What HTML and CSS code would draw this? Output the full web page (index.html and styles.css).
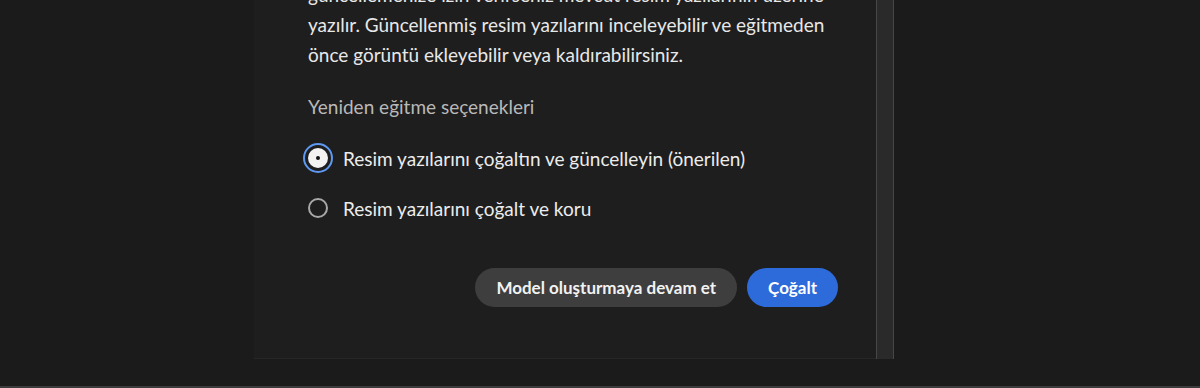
FILE: index.html
```html
<!DOCTYPE html>
<html lang="tr">
<head>
<meta charset="utf-8">
<title>Yeniden eğitme</title>
<link rel="stylesheet" href="styles.css">
</head>
<body>
<div class="screen">
  <div class="dialog">
    <div class="dialog-body">
      <p class="desc">güncellemenize izin verirseniz mevcut resim yazılarının üzerine<br>yazılır. Güncellenmiş resim yazılarını inceleyebilir ve eğitmeden<br>önce görüntü ekleyebilir veya kaldırabilirsiniz.</p>
      <div class="group-label">Yeniden eğitme seçenekleri</div>
      <div class="radios">
        <label class="radio">
          <span class="radio-ctl checked"><span class="radio-dot"></span></span>
          <span class="radio-text">Resim yazılarını çoğaltın ve güncelleyin (önerilen)</span>
        </label>
        <label class="radio">
          <span class="radio-ctl"><span class="radio-dot"></span></span>
          <span class="radio-text">Resim yazılarını çoğalt ve koru</span>
        </label>
      </div>
      <div class="actions">
        <button class="btn btn-secondary">Model oluşturmaya devam et</button>
        <button class="btn btn-primary">Çoğalt</button>
      </div>
    </div>
    <div class="scrollbar"></div>
  </div>
  <div class="bottom-line"></div>
</div>
</body>
</html>
```

FILE: styles.css
```css
html, body {
  margin: 0;
  padding: 0;
  background: #1b1b1b;
}
body {
  width: 1200px;
  height: 388px;
  overflow: hidden;
  font-family: "Lato", "Noto Sans", sans-serif;
  color: #e6e6e6;
}
.screen {
  height: 388px;
  display: flex;
  flex-direction: column;
}
.dialog {
  margin-left: 254px;
  width: 640px;
  height: 359px;
  display: flex;
  flex-shrink: 0;
}
.dialog-body {
  flex: 1;
  background: #1e1e1e;
  padding: 0 38px 0 54px;
  display: flex;
  flex-direction: column;
  overflow: hidden;
  border-bottom: 1px solid #262626;
}
.desc {
  margin: -20px 0 0 0;
  font-size: 19px;
  line-height: 30px;
  color: #e8e8e8;
  white-space: nowrap;
}
.group-label {
  margin-top: 22px;
  font-size: 19px;
  line-height: 30px;
  color: #b9b9b9;
}
.radios {
  margin-top: 11px;
  display: flex;
  flex-direction: column;
}
.radio {
  height: 50px;
  display: flex;
  align-items: center;
  gap: 10px;
  font-size: 19px;
  color: #ececec;
}
.radio-ctl {
  width: 30px;
  height: 30px;
  margin-left: -5px;
  border-radius: 50%;
  display: flex;
  align-items: center;
  justify-content: center;
  box-sizing: border-box;
}
.radio-dot {
  width: 20px;
  height: 20px;
  box-sizing: border-box;
  border-radius: 50%;
  border: 2px solid #a8a8a8;
  background: transparent;
}
.radio-ctl.checked {
  border: 2.5px solid #5e98f0;
}
.radio-ctl.checked .radio-dot {
  width: 20px;
  height: 20px;
  border: 8px solid #f2f2f2;
  background: #111;
  box-shadow: 0 0 0 1.5px #1e1e1e;
}
.actions {
  margin-top: 35px;
  display: flex;
  justify-content: flex-end;
  gap: 10px;
}
.btn {
  height: 39px;
  border: none;
  border-radius: 20px;
  padding: 0 21px;
  font-family: "Lato", "Noto Sans", sans-serif;
  font-weight: 700;
  font-size: 17px;
  color: #f2f2f2;
}
.btn-secondary {
  background: #3e3e3e;
}
.btn-primary {
  background: #2d6bda;
  color: #ffffff;
}
.scrollbar {
  width: 18px;
  box-sizing: border-box;
  background: #2a2a2a;
  border-left: 1px solid #474747;
  border-right: 1px solid #474747;
}
.bottom-line {
  margin-top: auto;
  height: 2px;
  background: #3c3c3c;
}
```
